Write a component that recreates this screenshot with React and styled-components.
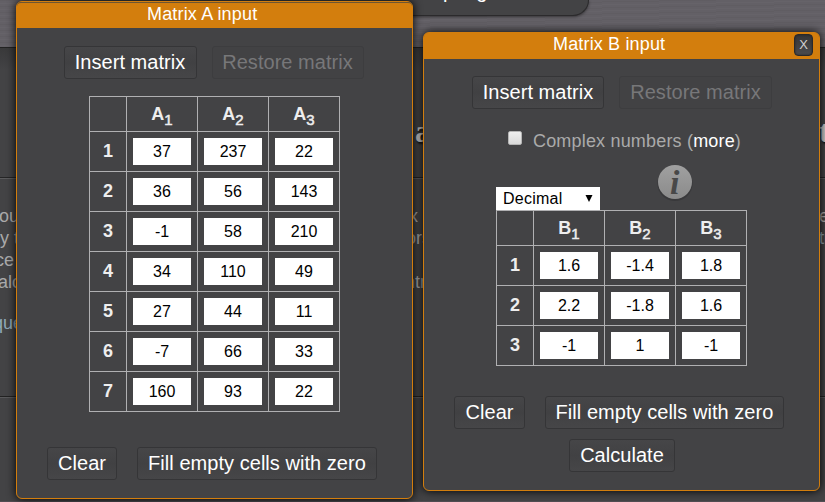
import React from "react";
import styled, { createGlobalStyle } from "styled-components";

const GlobalStyle = createGlobalStyle`
  * { box-sizing: border-box; }
  body {
    margin: 0;
    overflow: hidden;
    background: #434345;
    font-family: "Liberation Sans", Arial, sans-serif;
  }
`;

const Desktop = styled.main`
  position: relative;
  width: 825px;
  height: 502px;
  overflow: hidden;
  background: #434345;
`;

/* Page behind the dialogs */
const SiteHeader = styled.header`
  height: 47px;
  overflow: hidden;
  background:
    repeating-linear-gradient(179deg, rgba(0, 0, 0, 0.035) 0 1px, transparent 1px 3px, rgba(255, 255, 255, 0.02) 3px 4px, transparent 4px 6px),
    #636066;
`;

const SiteTab = styled.div`
  display: flex;
  align-items: flex-start;
  width: 549px;
  height: 16px;
  margin-left: 40px;
  padding-left: 403px;
  background: #434345;
  border: solid #2b2a2c;
  border-width: 0 1px 1px 0;
  border-bottom-right-radius: 16px;
  box-shadow: 0 1px 3px rgba(0, 0, 0, 0.45);
  color: #fff;
  font-size: 20px;
  line-height: 23px;
`;

const TabText = styled.span`
  margin-top: -20px;
`;

const Hero = styled.section`
  height: 131px;
  padding-top: 67px;
  background: linear-gradient(#39393a, #434345 22px);
  border-top: 1px solid #222;
  border-bottom: 1px solid #252526;
`;

const PageBody = styled.section`
  height: 219px;
  padding-top: 26px;
  border-top: 1px solid #5b5b5d;
  border-bottom: 1px solid #222;
`;

const PageFooter = styled.section`
  height: 105px;
  border-top: 1px solid #59595b;
  border-bottom: 1px solid #514d52;
`;

const Line = styled.div`
  display: grid;
  grid-template-columns: 16px 397px 10px 397px 5px;
  height: ${(p) => (p.$last ? 41 : 22)}px;
  align-items: end;
  color: #aaa;
  font-size: 18px;
  line-height: 22px;
`;

const Heading = styled(Line)`
  height: 34px;
  color: #c8c8c8;
  font: bold 31px/34px "Liberation Serif", serif;
  text-shadow: 1px 2px 2px #111;
`;

const Scrap = styled.span`
  grid-column: ${(p) => p.$col};
  overflow: hidden;
  white-space: nowrap;
  text-indent: ${(p) => p.$shift || 0}px;
  color: ${(p) => (p.$link ? "#8fa9b8" : "inherit")};
`;

/* Dialogs */
const Dialog = styled.section`
  position: absolute;
  left: ${(p) => p.$x}px;
  top: ${(p) => p.$y}px;
  width: 397px;
  height: ${(p) => p.$h}px;
  display: flex;
  flex-direction: column;
  align-items: center;
  background: #434345;
  border: 1px solid #d37e0d;
  border-radius: 6px;
  box-shadow: 0 0 10px #000;
`;

const TitleBar = styled.header`
  position: relative;
  align-self: stretch;
  height: 26px;
  flex: none;
  background: #d37e0d;
  border-top: 1px solid ${(p) => (p.$ruled ? "#6d5532" : "#d37e0d")};
  border-radius: 4px 4px 0 0;
`;

const Title = styled.h2`
  margin: 0;
  padding-left: ${(p) => p.$indent}px;
  color: #fff;
  font-size: 18px;
  font-weight: 400;
  letter-spacing: 0.16px;
  line-height: ${(p) => p.$line}px;
`;

const CloseButton = styled.button`
  position: absolute;
  top: 0;
  right: 6px;
  width: 19px;
  height: 22px;
  padding: 0 0 1px;
  border: 1px solid #29292b;
  border-radius: 4px;
  background: linear-gradient(#353537, #4b4b4d);
  box-shadow: inset 0 0 2px #222;
  color: #d0d0d0;
  font: 13px/19px "Liberation Sans", Arial, sans-serif;
`;

const ButtonRow = styled.div`
  display: flex;
  gap: ${(p) => p.$gap || 15}px;
  margin-top: ${(p) => p.$top}px;
  margin-left: ${(p) => p.$left || 0}px;
`;

const Button = styled.button`
  width: ${(p) => p.$w}px;
  height: 33px;
  padding: 0 0 1px;
  border: 1px solid #353537;
  border-radius: 3px;
  background: linear-gradient(#464648, #414143 50%, #464648);
  color: #fff;
  font: 20px/30px "Liberation Sans", Arial, sans-serif;
  letter-spacing: 0.04px;
  white-space: nowrap;
  &:disabled {
    border-color: #3d3d3f;
    background: #424244;
    color: #777779;
  }
`;

const Matrix = styled.div`
  display: grid;
  grid-template-columns: 36px repeat(3, 70px);
  grid-template-rows: 34px;
  grid-auto-rows: 39px;
  gap: 1px;
  padding: 1px;
  background: #b0b0b2;
  margin-top: ${(p) => p.$top}px;
`;

const HeadCell = styled.div`
  display: flex;
  align-items: center;
  justify-content: center;
  padding-top: ${(p) => (p.$column ? 1 : 0)}px;
  background: #434345;
  color: #eee;
  font-size: 18px;
  font-weight: 700;
`;

const Subscript = styled.sub`
  font-size: 15px;
  font-weight: 400;
  line-height: 17px;
  padding-top: 9px;
  vertical-align: baseline;
  -webkit-text-stroke: 0.5px #eee;
`;

const Cell = styled.div`
  padding: 6px;
  background: #434345;
`;

const CellInput = styled.input`
  display: block;
  width: 58px;
  height: 27px;
  padding: 0;
  border: 0;
  border-radius: 0;
  background: #fff;
  color: #000;
  text-align: center;
  font: 16px "Liberation Sans", Arial, sans-serif;
`;

const OptionRow = styled.label`
  display: flex;
  height: 22px;
  align-self: stretch;
  margin: 21px 0 0 84px;
  color: #aaa;
  font-size: 18px;
  letter-spacing: 0.18px;
  line-height: 22px;
  white-space: pre;
`;

const CheckBox = styled.input`
  appearance: none;
  width: 14px;
  height: 14px;
  margin: 1px 11px 0 0;
  border: 1px solid #b5b5b5;
  border-radius: 2px;
  background: linear-gradient(#eee, #d9d9d9);
`;

const MoreLink = styled.a`
  color: #fff;
`;

const FormatRow = styled.div`
  display: flex;
  justify-content: space-between;
  width: 251px;
  height: 47px;
  margin-top: 11px;
`;

const FormatSelect = styled.div`
  display: flex;
  align-items: center;
  justify-content: space-between;
  align-self: flex-end;
  width: 104px;
  height: 23px;
  padding: 0 7px 0 7px;
  background: #fff;
  color: #000;
  font-size: 16px;
  letter-spacing: 0.25px;
`;

const InfoIcon = styled.svg`
  width: 40px;
  height: 42px;
  margin: 0 52px 0 0;
`;

const InfoLetter = styled.text`
  font: italic bold 34px "Liberation Serif", serif;
  fill: #484848;
`;

function MatrixGrid({ name, rows, top }) {
  return (
    <Matrix $top={top}>
      <HeadCell />
      {[1, 2, 3].map((n) => (
        <HeadCell key={n} $column>
          {name}
          <Subscript>{n}</Subscript>
        </HeadCell>
      ))}
      {rows.map((row, i) => (
        <React.Fragment key={i}>
          <HeadCell>{i + 1}</HeadCell>
          {row.map((value, j) => (
            <Cell key={j}>
              <CellInput defaultValue={value} />
            </Cell>
          ))}
        </React.Fragment>
      ))}
    </Matrix>
  );
}

const matrixA = [
  [37, 237, 22],
  [36, 56, 143],
  [-1, 58, 210],
  [34, 110, 49],
  [27, 44, 11],
  [-7, 66, 33],
  [160, 93, 22],
];
const matrixB = [
  [1.6, -1.4, 1.8],
  [2.2, -1.8, 1.6],
  [-1, 1, -1],
];

export default function App() {
  return (
    <Desktop>
      <GlobalStyle />
      <SiteHeader>
        <SiteTab>
          <TabText>pring</TabText>
        </SiteTab>
      </SiteHeader>
      <Hero>
        <Heading>
          <Scrap $col={3} $shift={2}>a</Scrap>
          <Scrap $col={5} $shift={-1}>t</Scrap>
        </Heading>
      </Hero>
      <PageBody>
        <Line>
          <Scrap $col={1} $shift={-1}>ou</Scrap>
          <Scrap $col={3} $shift={-4}>x</Scrap>
          <Scrap $col={5} $shift={-1}>e</Scrap>
        </Line>
        <Line>
          <Scrap $col={1}>y t</Scrap>
          <Scrap $col={3} $shift={-7}>ors</Scrap>
          <Scrap $col={5} $shift={-1} $link>tr</Scrap>
        </Line>
        <Line>
          <Scrap $col={1} $shift={-5}>ce</Scrap>
        </Line>
        <Line>
          <Scrap $col={1} $shift={-2}>alc</Scrap>
          <Scrap $col={3} $shift={-8}>ntr</Scrap>
        </Line>
        <Line $last>
          <Scrap $col={1} $shift={-7} $link>que</Scrap>
        </Line>
      </PageBody>
      <PageFooter />

      <Dialog $x={16} $y={1} $h={498}>
        <TitleBar $ruled>
          <Title $indent={130} $line={23}>Matrix A input</Title>
        </TitleBar>
        <ButtonRow $top={18} $left={-2}>
          <Button $w={133}>Insert matrix</Button>
          <Button $w={152} disabled>Restore matrix</Button>
        </ButtonRow>
        <MatrixGrid name="A" rows={matrixA} top={17} />
        <ButtonRow $top={35} $gap={20} $left={-5}>
          <Button $w={70}>Clear</Button>
          <Button $w={240}>Fill empty cells with zero</Button>
        </ButtonRow>
      </Dialog>

      <Dialog $x={423} $y={32} $h={459}>
        <TitleBar>
          <Title $indent={129} $line={20}>Matrix B input</Title>
          <CloseButton>X</CloseButton>
        </TitleBar>
        <ButtonRow $top={17} $left={1}>
          <Button $w={132}>Insert matrix</Button>
          <Button $w={153} disabled>Restore matrix</Button>
        </ButtonRow>
        <OptionRow>
          <CheckBox type="checkbox" />
          <span>
            Complex numbers (<MoreLink>more</MoreLink>)
          </span>
        </OptionRow>
        <FormatRow>
          <FormatSelect>
            Decimal
            <svg width="8" height="7" viewBox="0 0 8 7">
              <path d="M0.5 0H7.5L4 7Z" fill="#000" />
            </svg>
          </FormatSelect>
          <InfoIcon viewBox="0 0 40 42">
            <defs>
              <linearGradient id="disc" x1="0" y1="0" x2="0" y2="1">
                <stop offset="0" stopColor="#a0a0a0" />
                <stop offset="1" stopColor="#8b8b8b" />
              </linearGradient>
            </defs>
            <circle cx="20" cy="20.5" r="17.6" fill="#353537" opacity="0.7" />
            <circle cx="20" cy="19" r="17" fill="url(#disc)" />
            <InfoLetter x="15" y="30.5">i</InfoLetter>
          </InfoIcon>
        </FormatRow>
        <MatrixGrid name="B" rows={matrixB} top={0} />
        <ButtonRow $top={30} $gap={20} $left={-5}>
          <Button $w={71}>Clear</Button>
          <Button $w={239}>Fill empty cells with zero</Button>
        </ButtonRow>
        <ButtonRow $top={10} $left={1}>
          <Button $w={106}>Calculate</Button>
        </ButtonRow>
      </Dialog>
    </Desktop>
  );
}
